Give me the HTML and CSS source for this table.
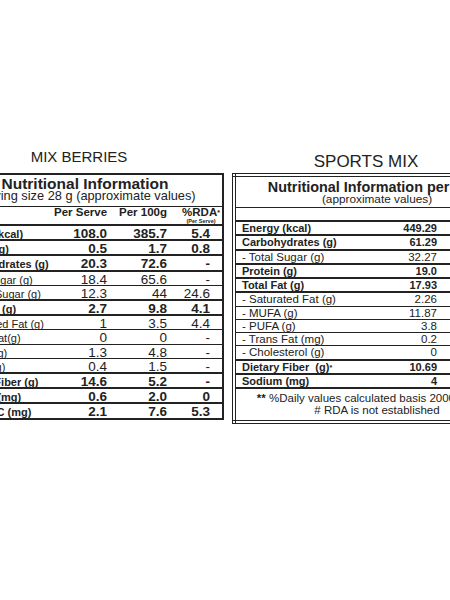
FILE: index.html
```html
<!DOCTYPE html>
<html lang="en">
<head>
    <meta charset="UTF-8">
    <title>Nutrition Facts</title>
    <link rel="stylesheet" href="styles.css">
</head>
<body>
    <div class="board">
        <section class="panel panel-berries">
            <h2 class="panel-title">MIX BERRIES</h2>
            <table class="facts facts-berries">
                <colgroup>
                    <col class="c-label">
                    <col class="c-val">
                    <col class="c-val">
                    <col class="c-rda">
                </colgroup>
                <tr class="head">
                    <td colspan="4">
                        <div class="head-title">Nutritional Information</div>
                        <div class="head-sub">Serving size 28 g (approximate values)</div>
                    </td>
                </tr>
                <tr class="cols">
                    <td></td>
                    <td class="col-name">Per Serve</td>
                    <td class="col-name">Per 100g</td>
                    <td class="col-name rda-head">%RDA<span class="star">*</span><span class="tiny">(Per Serve)</span></td>
                </tr>
                <tr class="strong"><td class="lbl">Energy (kcal)</td><td class="num">108.0</td><td class="num">385.7</td><td class="num">5.4</td></tr>
                <tr class="strong"><td class="lbl">Protein (g)</td><td class="num">0.5</td><td class="num">1.7</td><td class="num">0.8</td></tr>
                <tr class="strong"><td class="lbl">Carbohydrates (g)</td><td class="num">20.3</td><td class="num">72.6</td><td class="num">-</td></tr>
                <tr><td class="lbl">- Total Sugar (g)</td><td class="num">18.4</td><td class="num">65.6</td><td class="num">-</td></tr>
                <tr><td class="lbl">- Added Sugar (g)</td><td class="num">12.3</td><td class="num">44</td><td class="num">24.6</td></tr>
                <tr class="strong"><td class="lbl">Total Fat (g)</td><td class="num">2.7</td><td class="num">9.8</td><td class="num">4.1</td></tr>
                <tr><td class="lbl">- Saturated Fat (g)</td><td class="num">1</td><td class="num">3.5</td><td class="num">4.4</td></tr>
                <tr><td class="lbl">- Trans Fat(g)</td><td class="num">0</td><td class="num">0</td><td class="num">-</td></tr>
                <tr><td class="lbl">- MUFA (g)</td><td class="num">1.3</td><td class="num">4.8</td><td class="num">-</td></tr>
                <tr><td class="lbl">- PUFA (g)</td><td class="num">0.4</td><td class="num">1.5</td><td class="num">-</td></tr>
                <tr class="strong"><td class="lbl">Dietary Fiber (g)</td><td class="num">14.6</td><td class="num">5.2</td><td class="num">-</td></tr>
                <tr class="strong"><td class="lbl">Sodium (mg)</td><td class="num">0.6</td><td class="num">2.0</td><td class="num">0</td></tr>
                <tr class="strong"><td class="lbl">Vitamin C (mg)</td><td class="num">2.1</td><td class="num">7.6</td><td class="num">5.3</td></tr>
            </table>
        </section>

        <section class="panel panel-sports">
            <h2 class="panel-title">SPORTS MIX</h2>
            <table class="facts facts-sports">
                <tr class="head">
                    <td colspan="2">
                        <div class="head-title">Nutritional Information per 100g</div>
                        <div class="head-sub">(approximate values)</div>
                    </td>
                </tr>
                <tr class="blank"><td colspan="2"></td></tr>
                <tr class="strong"><td class="lbl">Energy (kcal)</td><td class="num">449.29</td></tr>
                <tr class="strong"><td class="lbl">Carbohydrates (g)</td><td class="num">61.29</td></tr>
                <tr><td class="lbl">- Total Sugar (g)</td><td class="num">32.27</td></tr>
                <tr class="strong"><td class="lbl">Protein (g)</td><td class="num">19.0</td></tr>
                <tr class="strong"><td class="lbl">Total Fat (g)</td><td class="num">17.93</td></tr>
                <tr><td class="lbl">- Saturated Fat (g)</td><td class="num">2.26</td></tr>
                <tr><td class="lbl">- MUFA (g)</td><td class="num">11.87</td></tr>
                <tr><td class="lbl">- PUFA (g)</td><td class="num">3.8</td></tr>
                <tr><td class="lbl">- Trans Fat (mg)</td><td class="num">0.2</td></tr>
                <tr><td class="lbl">- Cholesterol (g)</td><td class="num">0</td></tr>
                <tr class="strong"><td class="lbl">Dietary Fiber &nbsp;(g)<span class="star">*</span></td><td class="num">10.69</td></tr>
                <tr class="strong"><td class="lbl">Sodium (mg)</td><td class="num">4</td></tr>
                <tr class="note">
                    <td colspan="2">
                        <div><b>**</b> %Daily values calculated basis 2000kcal diet</div>
                        <div># RDA is not established</div>
                    </td>
                </tr>
            </table>
        </section>
    </div>
</body>
</html>
```

FILE: styles.css
```css
html,
body {
    margin: 0;
    overflow: hidden;
    background: #fff;
}

body {
    font-family: "Liberation Sans", Arial, sans-serif;
    color: #222;
}

.board {
    display: flex;
    align-items: flex-start;
    gap: 8px;
    margin-left: -54px;
    padding-top: 140px;
}

.panel {
    flex: none;
}

.panel-berries {
    width: 278px;
}

.panel-sports {
    width: 290px;
}

.panel-title {
    margin: 0;
    height: 33px;
    box-sizing: border-box;
    display: flex;
    align-items: flex-end;
    justify-content: center;
    font-weight: normal;
    line-height: 1;
}

.panel-berries .panel-title {
    font-size: 15px;
    padding-bottom: 9px;
    padding-right: 12px;
}

.panel-sports .panel-title {
    font-size: 17px;
    padding-bottom: 3px;
    padding-right: 22px;
}

/* tables */
.facts {
    width: 100%;
    border-collapse: collapse;
}

.facts td {
    padding: 0;
    border-bottom: 1px solid #222;
    white-space: nowrap;
    vertical-align: baseline;
}

.facts .strong td {
    font-weight: bold;
    border-top: 2px solid #222;
    border-bottom: 2px solid #222;
}

.facts .num {
    text-align: right;
}

.head td {
    text-align: center;
}

.head-title {
    font-weight: bold;
}

.star {
    font-size: 7px;
    vertical-align: top;
}

/* mix berries */
.facts-berries {
    table-layout: fixed;
    border: 2px solid #222;
}

.facts-berries .c-label {
    width: 107px;
}

.facts-berries .c-val {
    width: 60px;
}

.facts-berries .c-rda {
    width: 49px;
}

.facts-berries .head td {
    padding: 2px 0 4px;
}

.facts-berries .head-title {
    font-size: 15.5px;
    line-height: 13px;
}

.facts-berries .head-sub {
    font-size: 12.8px;
    line-height: 12px;
}

.facts-berries .cols td {
    font-size: 11.5px;
    font-weight: bold;
    line-height: 11px;
    vertical-align: top;
    border-bottom: 2px solid #222;
}

.facts-berries .col-name {
    text-align: right;
    padding-right: 7px;
}

.facts-berries .rda-head {
    text-align: center;
    padding: 0 0 0 6px;
}

.tiny {
    display: block;
    font-size: 5.5px;
    line-height: 6px;
}

.facts-berries .lbl {
    font-size: 11px;
    line-height: 9px;
    padding-top: 2px;
    padding-left: 6px;
}

.facts-berries .num {
    font-size: 13.5px;
    line-height: 11.2px;
    padding-top: 2px;
    padding-right: 7px;
}

.facts-berries .num:last-child {
    padding-right: 12px;
}

/* sports mix */
.facts-sports {
    border: 4px double #222;
}

.facts-sports .head td {
    padding: 4px 0 2px;
}

.facts-sports .head-title {
    font-size: 14.4px;
    line-height: 13px;
}

.facts-sports .head-sub {
    font-size: 11.8px;
    line-height: 11px;
}

.facts-sports .blank td {
    height: 12px;
    border-bottom: 2px solid #222;
}

.facts-sports .lbl,
.facts-sports .num {
    font-size: 11.5px;
    line-height: 11.25px;
    padding-top: 1px;
}

.facts-sports .strong .lbl,
.facts-sports .strong .num {
    font-size: 11px;
}

.facts-sports .lbl {
    padding-left: 6px;
}

.facts-sports .num {
    padding-right: 81px;
}

.facts-sports .note td {
    text-align: center;
    font-size: 11.5px;
    line-height: 11.5px;
    padding: 4px 0 4px;
}
```
